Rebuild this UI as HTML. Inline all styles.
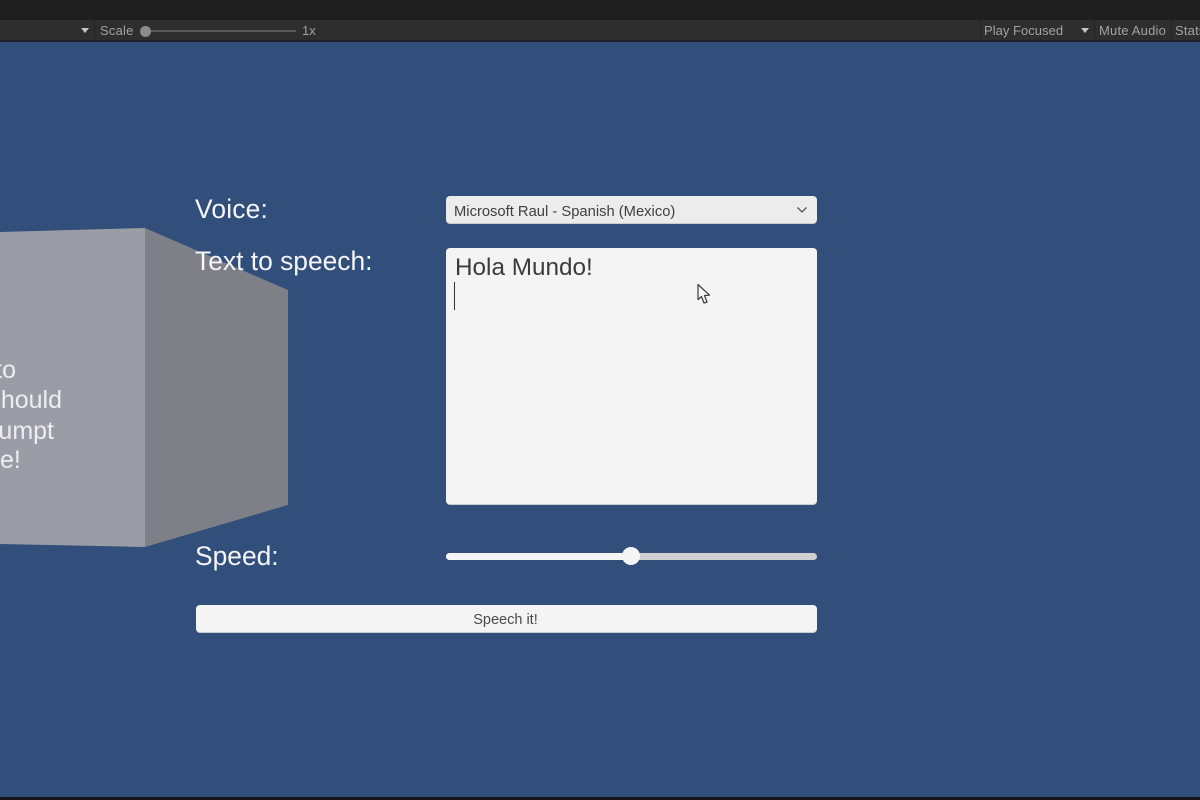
<!DOCTYPE html>
<html>
<head>
<meta charset="utf-8">
<style>
html,body{margin:0;padding:0;width:1200px;height:800px;overflow:hidden;background:#324e7a;font-family:"Liberation Sans",sans-serif}
#w{position:absolute;left:0;top:0;width:1200px;height:800px;overflow:hidden;filter:blur(.35px)}
.a{position:absolute;white-space:nowrap}
#top{left:0;top:0;width:1200px;height:20px;background:#1f1f1f}
#bar{left:0;top:20px;width:1200px;height:20px;background:#2e2e2e}
#line{left:0;top:40px;width:1200px;height:2px;background:#1c1f24}
#bot{left:0;top:797px;width:1200px;height:3px;background:#171717}
.sep{top:20px;width:1px;height:20px;background:#232323}
.tb{font-size:13px;line-height:20px;top:21px;color:#a3a3a3;letter-spacing:.2px}
.tri{width:0;height:0;border-left:4.5px solid transparent;border-right:4.5px solid transparent;border-top:5px solid #c4c4c4;top:28px}
.lab{color:#f3f5f8;font-size:26.4px;line-height:30px}
.cube{color:#eceef1;font-size:25px;line-height:30px;text-align:right}
.box{background:#f4f4f4;border-radius:4px;box-shadow:0 1px 0 #c9ccd2}
</style>
</head>
<body>
<div id="w">
<div class="a" id="top"></div>
<div class="a" id="bar"></div>
<div class="a" id="line"></div>
<div class="a tri" style="left:81px"></div>
<div class="a sep" style="left:94px"></div>
<div class="a tb" style="left:100px">Scale</div>
<div class="a" style="left:145px;top:30px;width:151px;height:2px;background:#575757"></div>
<div class="a" style="left:140px;top:26px;width:11px;height:11px;border-radius:50%;background:#8c8c8c"></div>
<div class="a tb" style="left:302px;letter-spacing:0">1x</div>
<div class="a sep" style="left:980px"></div>
<div class="a tb" style="left:984px;letter-spacing:.03px">Play Focused</div>
<div class="a tri" style="left:1081px"></div>
<div class="a sep" style="left:1094px"></div>
<div class="a tb" style="left:1099px">Mute Audio</div>
<div class="a sep" style="left:1171px"></div>
<div class="a tb" style="left:1175px">Stats</div>

<svg class="a" style="left:0;top:0" width="1200" height="800">
<polygon points="0,232 145,228 145,547 0,544" fill="#9a9da5"/>
<polygon points="145,228 288,290 288,505 145,547" fill="#7e8087"/>
</svg>

<div class="a cube" style="right:1184px;top:355px">to</div>
<div class="a cube" style="right:1138px;top:385px">should</div>
<div class="a cube" style="right:1146px;top:416px">jumpt</div>
<div class="a cube" style="left:0;top:445px">e!</div>

<div class="a lab" style="left:195px;top:194px;letter-spacing:.2px">Voice:</div>
<div class="a lab" style="left:195px;top:246px">Text to speech:</div>
<div class="a lab" style="left:195px;top:541px">Speed:</div>

<div class="a box" style="left:446px;top:196px;width:371px;height:27px;background:#ececec"></div>
<div class="a" style="left:454px;top:203.5px;font-size:14.75px;line-height:17px;color:#3f3f3f">Microsoft Raul - Spanish (Mexico)</div>
<svg class="a" style="left:796px;top:206px" width="12" height="9"><path d="M1.5 1.5 L6 6 L10.5 1.5" fill="none" stroke="#555" stroke-width="1.3"/></svg>

<div class="a box" style="left:446px;top:248px;width:371px;height:256px"></div>
<div class="a" style="left:455px;top:253px;font-size:24.3px;line-height:30px;color:#3c3c3c">Hola Mundo!</div>
<div class="a" style="left:454px;top:282px;width:1px;height:28px;background:#333"></div>
<svg class="a" style="left:696px;top:283px" width="16" height="23"><path d="M2 1.5 L2 16.5 L5.5 13.5 L8 20 L11 19 L8.5 12.5 L13.5 12.2 Z" fill="#fafafa" stroke="#3a3a3a" stroke-width="1.2" stroke-linejoin="round"/></svg>

<div class="a" style="left:446px;top:553px;width:371px;height:7px;border-radius:4px;background:#d0d0d0"></div>
<div class="a" style="left:446px;top:553px;width:185px;height:7px;border-radius:4px 0 0 4px;background:#f5f5f5"></div>
<div class="a" style="left:622px;top:547px;width:18px;height:18px;border-radius:50%;background:#f5f5f5"></div>

<div class="a box" style="left:196px;top:605px;width:621px;height:27px"></div>
<div class="a" style="left:196px;top:611.5px;width:619px;text-align:center;font-size:14.5px;line-height:17px;color:#4a4a4a">Speech it!</div>

<div class="a" id="bot"></div>
</div>
</body>
</html>
